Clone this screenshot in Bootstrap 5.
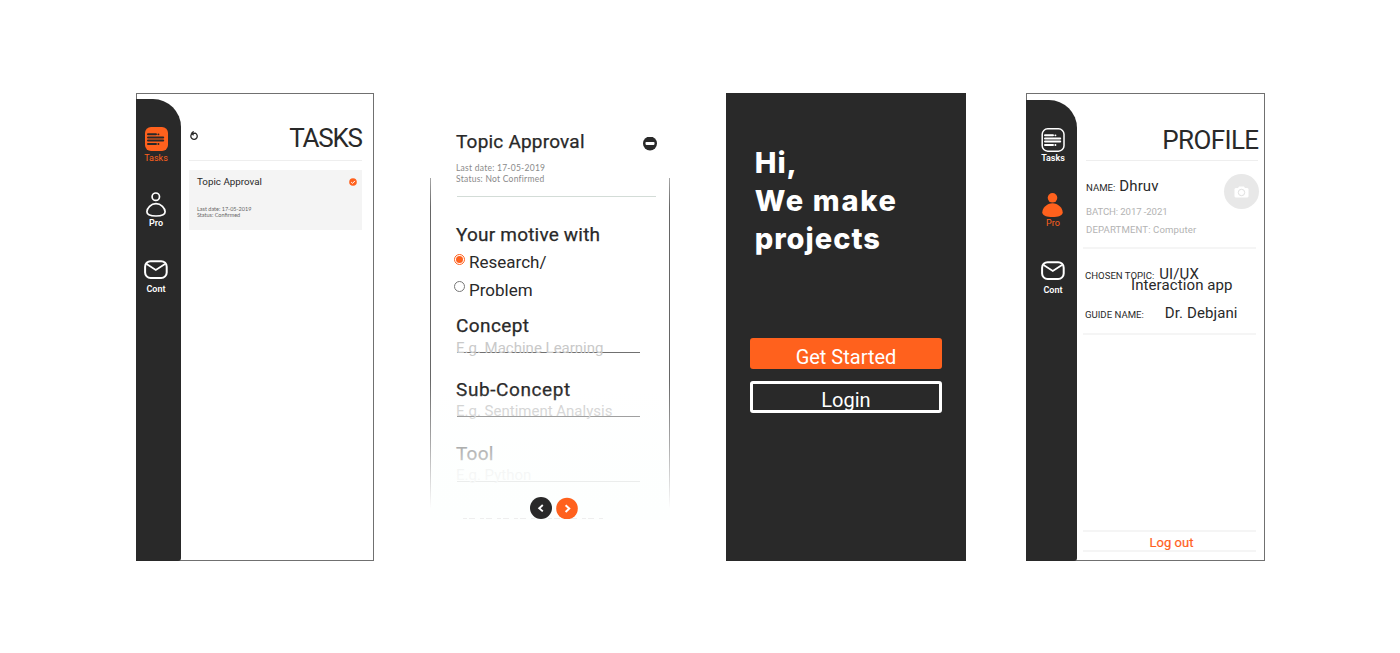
<!DOCTYPE html>
<html lang="en"><head><meta charset="utf-8"><title>Project app screens</title>
<meta name="viewport" content="width=device-width, initial-scale=1">
<link href="https://cdn.jsdelivr.net/npm/bootstrap@5.3.0/dist/css/bootstrap.min.css" rel="stylesheet">
<style>
body{background:#fff;color:#292929;font-family:Roboto,"Liberation Sans",sans-serif;height:653px;overflow:hidden}
.screens{padding:93px 0 0 136px;height:653px}
.screen{height:468px;flex:none}
.s-tasks{width:238px;margin-right:56px}
.s-form{width:240px;margin-right:56px}
.s-start{width:240px;margin-right:60px;background:#292929;color:#fff;padding:51px 24px 0}
.s-profile{width:239px}
.framed{border:1px solid #707070}
.tl{white-space:nowrap;display:block}
svg{display:block;flex:none}
.accent{color:#ff611d}

/* side navigation */
.side{background:#292929;color:#fff;flex:none;margin-left:-1px;margin-bottom:-1px;border-radius:0 28px 3px 0}
.s-tasks .side{width:45px;margin-top:5px;padding:28px 5px 0 0}
.s-profile .side{width:51px;margin-top:6px;padding:28px 0 0 3px}
.side .tl{font-size:9px;line-height:12px;font-weight:600}
.side .i-user{margin-top:28px}
.side .i-mail{margin-top:31px;margin-bottom:4px}
.s-tasks .i-task{margin-bottom:1px}
.s-profile .i-mail{margin-top:32px}

/* tasks and profile bodies */
.ttl{font-size:26px;line-height:30px;text-align:right}
.hr1{height:1px;background:#eee}
.hr2{height:2px;background:#f5f5f5;width:173px}
.s-tasks .main{padding:29px 0 0 8px;width:181px}
.s-tasks .ttl{letter-spacing:-1.2px;margin-right:.2px}
.s-tasks .hr1{margin-top:7px}
.reload{margin-top:8px}
.taskbox{height:60px;background:#f4f4f4;margin-top:9px;padding:6px 5px 0 8px}
.taskbox .name{font-size:9.8px;line-height:12px}
.tiny{font-family:Lato,sans-serif;font-size:5.5px;line-height:6px;color:#666;margin-top:18px}
.s-profile .main{padding:31px 0 0 6px;width:188px}
.s-profile .ttl{letter-spacing:-.6px;margin-right:5.5px}
.s-profile .hr1{margin:5px 6px 1px 3px}
.about{height:85px}
.facts{padding:14px 0 0 3px}
.k{font-size:9.6px;line-height:14px}
.v{font-size:15px;line-height:20px;letter-spacing:.1px}
.pair{height:20px;white-space:nowrap}
.p-name{gap:4px}
.p-topic{margin:15px 0 0 2px;gap:5px}
.p-guide{margin:8px 0 10px 2px;gap:21px}
.soft{color:#b3b3b3}
.batch{margin-top:9px;letter-spacing:-.1px}
.dept{margin-top:4px;letter-spacing:.12px}
.photo{width:35px;height:35px;background:#e8e8e8;margin:12px 5px 0 0}
.topic2{margin:-9px 0 0 48px}
.pre-out{margin-top:195px}
.out{font-size:13px;line-height:14px;margin-top:4px;width:177px;-webkit-text-stroke:.2px}

/* approval form */
.s-form{position:relative;padding:37px 13px 0 26px}
.h-form{font-size:19px;line-height:24px;font-weight:400;letter-spacing:.2px;margin:0;-webkit-text-stroke:.25px}
.h-form.wider{letter-spacing:.6px;margin-top:25px}
.h-form.first{margin-top:13px;letter-spacing:.4px}
.h-form.last-h{letter-spacing:.2px}
.meta{font-size:8.5px;line-height:11px;color:#8a8a8a;font-family:Lato,sans-serif;letter-spacing:.25px;padding-top:9px}
.form-rule{height:1px;background:#d3dcd7;margin:11px 1px 26px 1px}
.opt{font-size:17px;line-height:22px;margin:4px 0 0 -2px;gap:4px}
.opt.second{margin-top:6px}
.dot{width:11px;height:11px;border:1px solid #777;border-radius:50%;margin-top:2px;padding:1px}
.dot.sel{border-color:#ff611d;margin-top:3px;background:#ff611d content-box}
.ph{font-size:15px;line-height:18px;color:#c9c9c9;border-bottom:1px solid #707070;width:183px;margin-left:1px;text-indent:-1px;white-space:nowrap;height:15px}
.ph.p1{height:14px;margin-top:1px}
.ph.p3{height:16px}
.fade-out{position:absolute;left:0;right:0;top:297px;height:130px;background:linear-gradient(#fdfffe00,#fdfffe55 26px,#fdfffea4 60px,#fdfffed8 84px,#fdfffe)}
.edges{position:absolute;left:0;right:0;top:85px;height:330px;border:1px solid;border-width:0 1px;border-image:linear-gradient(#aaa,#666 30px,#666 200px,#aaa 265px,#fff) 1}
.cut{position:absolute;left:33px;top:425px;width:141px;height:1px;background:repeating-linear-gradient(90deg,#eee 0 4px,transparent 4px 6px,#eee 6px 12px,transparent 12px 17px)}
.pager{position:absolute;left:100px;top:404px;gap:4px}

/* start screen */
.hello{font-family:Inter,sans-serif;font-weight:800;font-size:29px;line-height:38px;letter-spacing:1px;margin:0 0 80px 4.7px;white-space:nowrap}
.hello span{letter-spacing:1.7px}
.cta{font-size:20px;line-height:24px;border-radius:3px;color:#fff;text-align:center;text-decoration:none;overflow:hidden;display:block}
.cta-a{background:#ff611d;height:31px;padding-top:7px}
.cta-b{border:3px solid #fff;height:32px;margin-top:12px;padding-top:4px}
</style></head><body>
<svg width="0" height="0" class="position-absolute">
<symbol id="lines" viewBox="0 0 24 24"><path d="M4 7.300H12M4 10.400H19.200M4 13.600H19.200M4 17H12" stroke-width="2" stroke-linecap="round"/><path d="M14.300 7.300h.2M14.300 17h.2" stroke-width="1.800" stroke-linecap="round"/></symbol>
<symbol id="mail" viewBox="0 0 24 19"><rect x="1.100" y="1.200" width="21.600" height="16.800" rx="5.500" fill="none" stroke="#fff" stroke-width="2"/><path d="M2.600 4l9.200 6L21 4" fill="none" stroke="#fff" stroke-width="1.800"/></symbol>
</svg>
<main class="screens d-flex">

<section class="screen s-tasks framed d-flex">
<nav class="side d-flex flex-column align-items-center">
<svg class="i-task" width="24" height="24"><rect x="1" y="0" width="23" height="24" rx="6" fill="#ff611d"/><use href="#lines" width="24" height="24" stroke="#292929"/></svg>
<span class="tl accent fw-normal">Tasks</span>
<svg class="i-user" width="20" height="25" fill="none" stroke="#fff" stroke-width="1.700"><circle cx="9.800" cy="4.700" r="3.700"/><path d="M10 11.600C5 11.600 .9 16 .9 19.800.9 23.200 5 24 10 24s9.100-.8 9.100-4.200C19.100 16 15 11.600 10 11.600Z"/></svg>
<span class="tl">Pro</span>
<svg class="i-mail" width="24" height="19"><use href="#mail" width="24" height="19"/></svg>
<span class="tl">Cont</span>
</nav>
<div class="main">
<div class="d-flex justify-content-between">
<svg class="reload" width="10" height="10" fill="none" stroke="#292929" stroke-width="1.300"><path d="M3 2.700A3.200 3.200 0 1 0 6.200 2.200L3 2.300M4.600.4L2.600 2.300l2 2"/></svg>
<span class="tl ttl">TASKS</span></div>
<div class="hr1"></div>
<div class="taskbox"><div class="d-flex justify-content-between align-items-center"><span class="tl name">Topic Approval</span>
<svg width="8" height="8"><circle cx="4" cy="4" r="3.800" fill="#ff611d"/><path d="M2.200 4.100l1.300 1.300 2.400-2.500" fill="none" stroke="#fff"/></svg></div>
<div class="tiny">Last date: 17-05-2019<br>Status: Confirmed</div></div>
</div>
</section>

<section class="screen s-form">
<div class="d-flex justify-content-between align-items-center"><h2 class="h-form tl">Topic Approval</h2>
<svg width="14" height="14" class="mt-1"><circle cx="7" cy="6.500" r="7" fill="#292929"/><rect x="2.500" y="5" width="9" height="2.900" rx=".8" fill="#fff"/></svg></div>
<div class="meta">Last date: 17-05-2019<br>Status: Not Confirmed</div>
<div class="form-rule"></div>
<h3 class="h-form">Your motive with</h3>
<div class="opt d-flex"><span class="dot sel"></span><span>Research/</span></div>
<div class="opt second d-flex"><span class="dot"></span><span>Problem</span></div>
<h3 class="h-form first">Concept</h3>
<div class="ph p1">E.g. Machine Learning</div>
<h3 class="h-form wider">Sub-Concept</h3>
<div class="ph">E.g. Sentiment Analysis</div>
<h3 class="h-form wider last-h">Tool</h3>
<div class="ph p3">E.g. Python</div>
<div class="fade-out"></div><div class="edges"></div><div class="cut"></div>
<div class="pager d-flex">
<svg width="22" height="22"><circle cx="11" cy="11" r="11" fill="#292929"/><path d="M12.800 8l-3.600 3.200 3.600 3.200" fill="none" stroke="#fff" stroke-width="1.900"/></svg>
<svg width="22" height="22"><circle cx="11" cy="11.500" r="10.800" fill="#ff611d"/><path d="M9.600 8.300l3.600 3.300-3.600 3.300" fill="none" stroke="#fff" stroke-width="2"/></svg>
</div>
</section>

<section class="screen s-start">
<h1 class="hello">Hi,<br><span>We make</span><br>projects</h1>
<a class="cta cta-a" href="#">Get Started</a>
<a class="cta cta-b" href="#">Login</a>
</section>

<section class="screen s-profile framed d-flex">
<nav class="side d-flex flex-column align-items-center">
<svg class="i-task" width="24" height="24"><rect x="1.200" y=".8" width="21.800" height="22.400" rx="5.500" fill="none" stroke="#fff" stroke-width="1.500"/><use href="#lines" width="24" height="24" stroke="#fff"/></svg>
<span class="tl">Tasks</span>
<svg class="i-user" width="22" height="25" fill="#ff611d"><circle cx="10.500" cy="5.800" r="4.800"/><path d="M10.500 11.200C5 11.200.3 16 .3 20.300.3 24 5 25 10.500 25s10.200-1 10.200-4.700C20.700 16 16 11.200 10.500 11.200Z"/></svg>
<span class="tl accent fw-normal">Pro</span>
<svg class="i-mail" width="24" height="19"><use href="#mail" width="24" height="19"/></svg>
<span class="tl">Cont</span>
</nav>
<div class="main">
<div class="tl ttl">PROFILE</div>
<div class="hr1"></div>
<div class="about d-flex justify-content-between">
<div class="facts">
<div class="pair p-name d-flex align-items-baseline"><span class="k">NAME:</span><span class="v">Dhruv</span></div>
<div class="k soft tl batch">BATCH: 2017 -2021</div>
<div class="k soft tl dept">DEPARTMENT: Computer</div></div>
<div class="photo rounded-circle d-flex align-items-center justify-content-center">
<svg width="15" height="12"><path d="M1.500 2H4l1-1.500h5L11 2h2.500l1 1v7.500l-1 1h-12l-1-1V3z" fill="#fff"/><circle cx="7.500" cy="6.500" r="3.200" fill="none" stroke="#e0e0e0"/></svg></div>
</div>
<div class="hr2"></div>
<div class="pair p-topic d-flex align-items-baseline"><span class="k">CHOSEN TOPIC:</span><span class="v">UI/UX</span></div>
<div class="v tl topic2">Interaction app</div>
<div class="pair p-guide d-flex align-items-baseline"><span class="k">GUIDE NAME:</span><span class="v">Dr. Debjani</span></div>
<div class="hr2"></div>
<div class="hr2 pre-out"></div>
<div class="out accent text-center">Log out</div>
<div class="hr2"></div>
</div>
</section>
</main>
<script src="https://cdn.jsdelivr.net/npm/bootstrap@5.3.0/dist/js/bootstrap.bundle.min.js"></script>
</body></html>
